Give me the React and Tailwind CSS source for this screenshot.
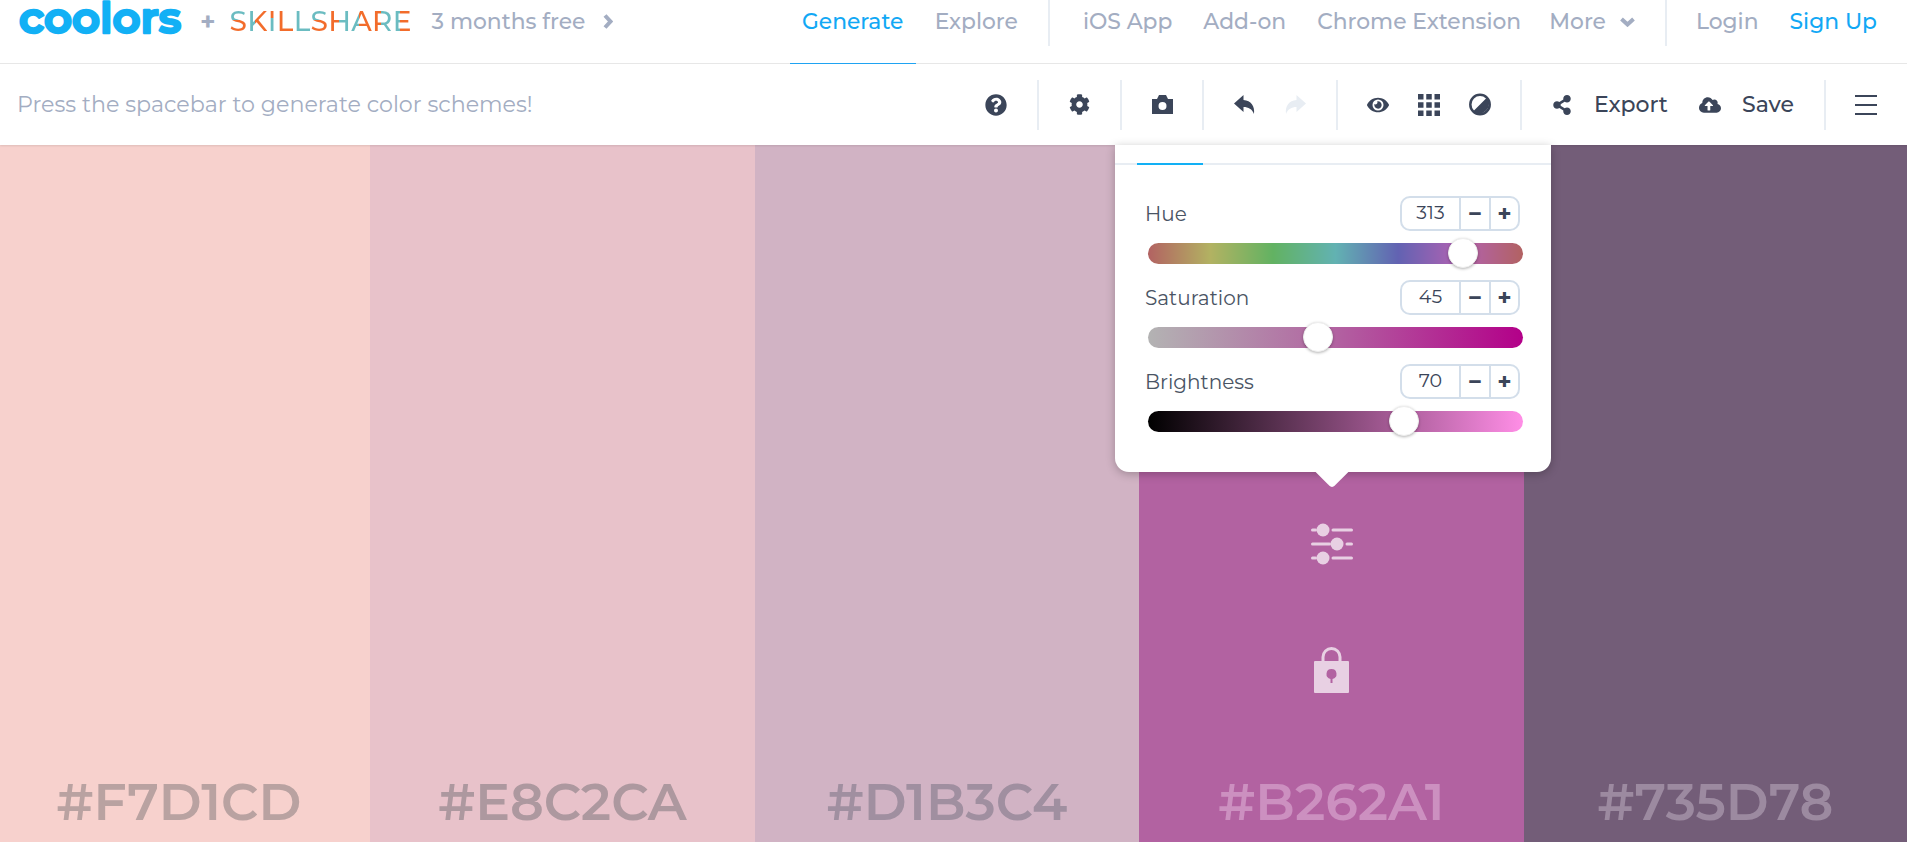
import { FaQuestionCircle, FaCog, FaEye, FaShareAlt, FaCloudUploadAlt } from "react-icons/fa"

const font = "font-['Montserrat','Inter','Liberation_Sans',sans-serif]"

// each logo letter is split in two colours
const skill = [
  ["S", "bg-[linear-gradient(180deg,#6bbcc1_45%,#f26c2b_45%)]"],
  ["K", "bg-[linear-gradient(90deg,#6bbcc1_40%,#f26c2b_40%)]"],
  ["I", "bg-[linear-gradient(180deg,#f26c2b_40%,#6bbcc1_40%)]"],
  ["L", "bg-[linear-gradient(180deg,#f26c2b_100%,#f26c2b_100%)]"],
  ["L", "bg-[linear-gradient(180deg,#6bbcc1_100%,#6bbcc1_100%)]"],
  ["S", "bg-[linear-gradient(180deg,#6bbcc1_45%,#f26c2b_45%)]"],
  ["H", "bg-[linear-gradient(90deg,#f26c2b_50%,#6bbcc1_50%)]"],
  ["A", "bg-[linear-gradient(90deg,#6bbcc1_40%,#f26c2b_40%)]"],
  ["R", "bg-[linear-gradient(90deg,#f26c2b_45%,#6bbcc1_45%)]"],
  ["E", "bg-[linear-gradient(90deg,#6bbcc1_35%,#f26c2b_35%)]"],
]

function Divider({ className }) {
  return <div className={`w-[2px] bg-[#e8edf3] ${className}`} />
}

function Chevron({ dir, className }) {
  return (
    <svg className={className} width={dir === "down" ? 15 : 10} height={dir === "down" ? 10 : 15} viewBox={dir === "down" ? "0 0 15 10" : "0 0 10 15"} fill="none" stroke="#a3adc2" strokeWidth="4">
      <path d={dir === "down" ? "M1.500 2l6 5.500 6-5.500" : "M2 1.500l5.500 6-5.500 6"} />
    </svg>
  )
}

function ReplyIcon({ flip, color }) {
  return (
    <svg className={flip ? "-scale-x-100" : ""} width="21" height="21" viewBox="0 0 21 21" fill={color}>
      <path d="M9.500 1L0 9.500 9.500 18v-5c5 0 8.500 2 10.500 7 1-8-3-13.500-10.500-14z" />
    </svg>
  )
}

function CameraIcon() {
  return (
    <svg width="21" height="19" viewBox="0 0 21 19" fill="#3b4559">
      <path fillRule="evenodd" d="M0 4h5l2-4h7l2 4h5v15H0zM10.500 7a4 4 0 1 0 0 8 4 4 0 0 0 0-8z" />
    </svg>
  )
}

function GridIcon() {
  return (
    <svg width="22" height="22" viewBox="0 0 22 22" fill="#3b4559">
      {[0, 8.25, 16.5].map((y) =>
        [0, 8.25, 16.5].map((x) => <rect key={`${x}-${y}`} x={x} y={y} width="5.500" height="5.500" />)
      )}
    </svg>
  )
}

function ContrastIcon() {
  return (
    <svg width="22" height="23" viewBox="0 0 22 23">
      <circle cx="11" cy="11.500" r="9.700" fill="#fff" stroke="#3b4559" strokeWidth="2.500" />
      <path d="M18 4.500A10 10 0 0 1 4 18.500z" fill="#3b4559" />
    </svg>
  )
}

function SlidersIcon() {
  return (
    <svg width="42" height="42" viewBox="0 0 42 42" stroke="#e8d0e3" strokeWidth="3" strokeLinecap="round" fill="#e8d0e3">
      <path d="M1.500 7h3M22 7h18.500M1.500 21h17M36 21h4.500M1.500 35h3M22 35h18.500" fill="none" />
      <circle cx="12" cy="7" r="6.500" stroke="none" />
      <circle cx="26" cy="21" r="6.500" stroke="none" />
      <circle cx="12" cy="35" r="6.500" stroke="none" />
    </svg>
  )
}

function LockIcon() {
  return (
    <svg width="35" height="46" viewBox="0 0 35 46" fill="#e8d0e3">
      <path d="M9 15V10a8.500 8.500 0 0 1 17 0v5" fill="none" stroke="#e8d0e3" strokeWidth="3" />
      <path fillRule="evenodd" d="M1 14h33a1 1 0 0 1 1 1v30a1 1 0 0 1-1 1H1a1 1 0 0 1-1-1V15a1 1 0 0 1 1-1zM17.500 22a5 5 0 0 0-1 9.900V36h2v-4.100a5 5 0 0 0-1-9.900z" />
    </svg>
  )
}

function Stepper({ value }) {
  return (
    <div className="flex h-[35px] w-[120px] items-center rounded-[10px] border-2 border-[#d3deea] text-[#3b4559]">
      <span className="flex h-full w-[59px] items-center justify-center border-r-2 border-[#d3deea] text-[19px]">{value}</span>
      <span className="flex h-full w-[30px] items-center justify-center border-r-2 border-[#d3deea] text-[24px] font-bold leading-none">−</span>
      <span className="flex h-full flex-1 items-center justify-center text-[24px] font-bold leading-none">+</span>
    </div>
  )
}

function Slider({ label, value, track, thumb }) {
  return (
    <div>
      <div className="flex h-[35px] items-center justify-between">
        <span className="pl-[30px] text-[20px] text-[#4a5464]">{label}</span>
        <div className="pr-[31px]"><Stepper value={value} /></div>
      </div>
      <div className={`relative mt-[12px] ml-[33px] h-[21px] w-[375px] rounded-full ${track}`}>
        <div className={`absolute top-[-5px] h-[30px] w-[30px] rounded-full border border-[#eee] bg-white shadow-[0_1px_3px_rgba(0,0,0,0.3)] ${thumb}`} />
      </div>
    </div>
  )
}

function Swatch({ width, bg, text, textColor, textClass = "", children }) {
  return (
    <div className={`relative flex h-full flex-col items-center ${width} ${bg}`}>
      {children}
      <div className={`mt-auto mb-[10px] text-[52px] font-semibold leading-[60px] ${textColor} ${textClass}`}>{text}</div>
    </div>
  )
}

export default function App() {
  return (
    <div className={`flex h-screen flex-col overflow-hidden bg-white ${font}`}>
      {/* Top nav */}
      <div className="flex h-[64px] shrink-0 border-b border-[#e8e8e8] text-[21.8px] leading-[28px] font-medium text-[#a3adc2]">
        <div className="ml-[17px] flex h-[42px] items-center">
          <svg className="overflow-visible" width="166" height="40" viewBox="0 0 166 40">
            <text x="2" y="32" textLength="162" lengthAdjust="spacingAndGlyphs" fontSize="42" fontWeight="600" fontFamily="Montserrat, Inter, sans-serif" fill="#12b0f5" stroke="#12b0f5" strokeWidth="2.500" strokeLinejoin="round">coolors</text>
          </svg>
          <span className="ml-[17px] text-[26px] font-bold">+</span>
          <span className="ml-[14px] flex w-[182px] justify-between text-[28px] leading-none font-medium">
            {skill.map(([ch, grad], i) => (
              <span key={i} className={`bg-clip-text text-transparent ${grad}`}>{ch}</span>
            ))}
          </span>
          <span className="ml-[20px] whitespace-nowrap">3 months free</span>
          <Chevron className="ml-[18px]" />
        </div>

        <div className="ml-auto flex">
          <div className="mb-[-1px] flex h-[64px] w-[126px] justify-center border-b border-[#20a4f3] pt-[7px] text-[#12a8f5]">Generate</div>
          <span className="ml-[19px] pt-[7px]">Explore</span>
          <Divider className="ml-[30px] h-[46px]" />
          <span className="ml-[33px] pt-[7px]">iOS App</span>
          <span className="ml-[31px] pt-[7px]">Add-on</span>
          <span className="ml-[31px] pt-[7px]">Chrome Extension</span>
          <span className="ml-[28px] pt-[7px]">More</span>
          <Chevron dir="down" className="mt-[17px] ml-[14px]" />
          <Divider className="ml-[30px] h-[46px]" />
          <span className="ml-[29px] pt-[7px]">Login</span>
          <span className="mr-[30px] ml-[31px] pt-[7px] text-[#12a8f5]">Sign Up</span>
        </div>
      </div>

      {/* Toolbar */}
      <div className="relative z-10 flex h-[81px] shrink-0 items-center text-[#3b4559] shadow-[0_1px_2px_rgba(0,0,0,0.1)]">
        <span className="ml-[17px] text-[22.2px] leading-[28px] text-[#a3adc2]">Press the spacebar to generate color schemes!</span>
        <div className="ml-auto flex items-center">
          <FaQuestionCircle size={22} />
          <Divider className="ml-[30px] h-[50px]" />
          <FaCog className="ml-[30px]" size={21} />
          <Divider className="ml-[30px] h-[50px]" />
          <div className="ml-[30px]"><CameraIcon /></div>
          <Divider className="ml-[29px] h-[50px]" />
          <div className="ml-[30px]"><ReplyIcon color="#3b4559" /></div>
          <div className="ml-[30px]"><ReplyIcon flip color="#e8edf3" /></div>
          <Divider className="ml-[30px] h-[50px]" />
          <FaEye className="ml-[29px]" size={22} />
          <div className="ml-[29px]"><GridIcon /></div>
          <div className="ml-[29px]"><ContrastIcon /></div>
          <Divider className="ml-[29px] h-[50px]" />
          <FaShareAlt className="ml-[30px]" size={20} />
          <span className="ml-[22px] text-[22px] font-medium">Export</span>
          <FaCloudUploadAlt className="ml-[31px]" size={22} />
          <span className="ml-[21px] text-[22px] font-medium">Save</span>
          <Divider className="ml-[30px] h-[50px]" />
          <div className="mr-[30px] ml-[29px] flex h-[20px] w-[22px] flex-col justify-between">
            <div className="h-[2px] bg-[#3b4559]" />
            <div className="h-[2px] bg-[#3b4559]" />
            <div className="h-[2px] bg-[#3b4559]" />
          </div>
        </div>
      </div>

      {/* Colour columns */}
      <div className="flex min-h-0 flex-1">
        <Swatch width="w-[370px]" bg="bg-[#F7D1CD]" text="#F7D1CD" textColor="text-[#b9a2a1]" textClass="mr-[12px]" />
        <Swatch width="w-[385px]" bg="bg-[#E8C2CA]" text="#E8C2CA" textColor="text-[#ad989f]" />
        <Swatch width="w-[384px]" bg="bg-[#D1B3C4]" text="#D1B3C4" textColor="text-[#a08fa0]" />
        <Swatch width="w-[385px]" bg="bg-[#B262A1]" text="#B262A1" textColor="text-[#cc90c0]">
          {/* Adjust panel */}
          <div className="absolute top-0 left-[-24px] z-20 h-[327px] w-[436px] rounded-b-[14px] bg-white shadow-[0_2px_10px_rgba(0,0,0,0.25)]">
            <div className="h-[20px] border-b-2 border-[#e8edf3]">
              <div className="ml-[22px] h-[20px] w-[66px] border-b-2 border-[#12b0f5]" />
            </div>
            <div className="mt-[31px] flex flex-col gap-[16px]">
              <Slider
                label="Hue"
                value="313"
                track="bg-[linear-gradient(90deg,#b26262,#b2b262,#62b262,#62b2b2,#6262b2,#b262b2,#b26262)]"
                thumb="left-[300px]"
              />
              <Slider
                label="Saturation"
                value="45"
                track="bg-[linear-gradient(90deg,#b3b3b3,#b262a1,#b30089)]"
                thumb="left-[155px]"
              />
              <Slider
                label="Brightness"
                value="70"
                track="bg-[linear-gradient(90deg,#000000,#b262a1_70%,#ff8ee6)]"
                thumb="left-[241px]"
              />
            </div>
            <div className="absolute bottom-[-11px] left-[204px] h-[26px] w-[26px] rotate-45 rounded-br-[4px] bg-white" />
          </div>
          <div className="mt-[378px]"><SlidersIcon /></div>
          <div className="mt-[82px]"><LockIcon /></div>
        </Swatch>
        <Swatch width="flex-1" bg="bg-[#735D78]" text="#735D78" textColor="text-[#9c8aa0]" />
      </div>
    </div>
  )
}
